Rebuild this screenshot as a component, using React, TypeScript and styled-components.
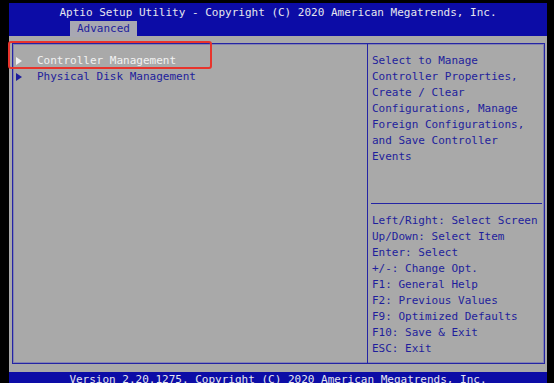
import styled, { createGlobalStyle } from "styled-components"

const GlobalStyle = createGlobalStyle`
  html, body {
    margin: 0;
    padding: 0;
    background: #000;
  }
`

const BLUE = "#0c0ca6"
const GREY = "#a9a9a9"
const INK = "#1e1e9c"
const LIGHT = "#e6e6ee"

const Monitor = styled.div`
  position: relative;
  width: 554px;
  height: 383px;
  overflow: hidden;
  background: #000;
  padding: 3px 7px 0 9px;
  box-sizing: border-box;
  font-family: "DejaVu Sans Mono", "Liberation Mono", monospace;
  font-size: 11px;
  line-height: 16px;
`

const Screen = styled.div`
  display: flex;
  flex-direction: column;
  height: 390px;
  background: ${GREY};
`

const Header = styled.div`
  background: ${BLUE};
  height: 33px;
  display: flex;
  flex-direction: column;
`

const Title = styled.div`
  color: ${LIGHT};
  text-align: center;
  padding-top: 2px;
  height: 16px;
`

const Tabs = styled.div`
  display: flex;
  padding-left: 61px;
`

const Tab = styled.div`
  background: #a8a8b2;
  color: ${INK};
  padding: 0 7px;
  height: 16px;
`

const Body = styled.div`
  height: 336px;
  padding: 7px 2px 8px 3px;
  box-sizing: border-box;
  display: flex;
`

const Frame = styled.div`
  flex: 1;
  display: flex;
  border: 1px solid #2424a4;
  box-shadow: inset 0 0 0 1px rgba(60, 60, 190, 0.35);
`

const MenuPane = styled.div`
  width: 355px;
  box-sizing: border-box;
  border-right: 1px solid #2424a4;
  padding: 9px 0 0 3px;
`

const MenuRow = styled.div<{ $active?: boolean }>`
  display: flex;
  align-items: center;
  height: 16px;
  color: ${({ $active }) => ($active ? "#f2f2f2" : INK)};
`

const Arrow = styled.span<{ $active?: boolean }>`
  width: 0;
  height: 0;
  border-top: 4px solid transparent;
  border-bottom: 4px solid transparent;
  border-left: 6px solid ${({ $active }) => ($active ? "#f2f2f2" : INK)};
  margin-right: 15px;
`

const HelpPane = styled.div`
  flex: 1;
  display: flex;
  flex-direction: column;
  color: ${INK};
`

const HelpTop = styled.div`
  flex: 1;
  padding: 9px 0 0 4px;
`

const Rule = styled.div`
  height: 1px;
  background: #2424a4;
  margin: 0 2px 0 3px;
`

const HelpKeys = styled.div`
  padding: 9px 0 6px 4px;
  white-space: pre;
`

const Footer = styled.div`
  background: ${BLUE};
  color: ${LIGHT};
  text-align: center;
  flex: 1;
`

const Highlight = styled.div`
  position: absolute;
  left: 8px;
  top: 41px;
  width: 204px;
  height: 28px;
  box-sizing: border-box;
  border: 2px solid #e8342c;
  border-radius: 3px;
`

const description = [
  "Select to Manage",
  "Controller Properties,",
  "Create / Clear",
  "Configurations, Manage",
  "Foreign Configurations,",
  "and Save Controller",
  "Events",
]

const keys = [
  "Left/Right: Select Screen",
  "Up/Down: Select Item",
  "Enter: Select",
  "+/-: Change Opt.",
  "F1: General Help",
  "F2: Previous Values",
  "F9: Optimized Defaults",
  "F10: Save & Exit",
  "ESC: Exit",
]

export default function App() {
  return (
    <>
      <GlobalStyle />
      <Monitor>
        <Screen>
          <Header>
            <Title>Aptio Setup Utility - Copyright (C) 2020 American Megatrends, Inc.</Title>
            <Tabs>
              <Tab>Advanced</Tab>
            </Tabs>
          </Header>
          <Body>
            <Frame>
              <MenuPane>
                <MenuRow $active>
                  <Arrow $active />
                  Controller Management
                </MenuRow>
                <MenuRow>
                  <Arrow />
                  Physical Disk Management
                </MenuRow>
              </MenuPane>
              <HelpPane>
                <HelpTop>
                  {description.map((l) => (
                    <div key={l}>{l}</div>
                  ))}
                </HelpTop>
                <Rule />
                <HelpKeys>
                  {keys.map((l) => (
                    <div key={l}>{l}</div>
                  ))}
                </HelpKeys>
              </HelpPane>
            </Frame>
          </Body>
          <Footer>Version 2.20.1275. Copyright (C) 2020 American Megatrends, Inc.</Footer>
        </Screen>
        <Highlight />
      </Monitor>
    </>
  )
}
